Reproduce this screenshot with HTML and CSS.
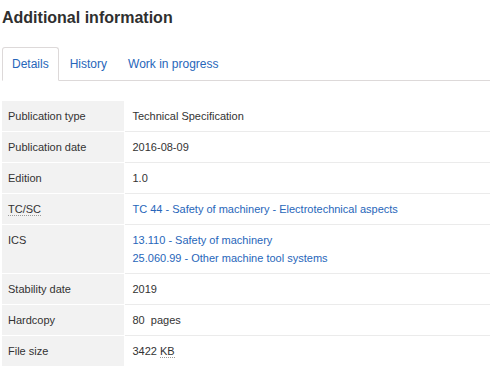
FILE: index.html
```html
<!DOCTYPE html>
<html lang="en">
<head>
    <meta charset="UTF-8">
    <title>Additional information</title>
    <link rel="stylesheet" href="styles.css">
</head>
<body>
    <div class="container">
        <h2 class="section-title">Additional information</h2>

        <ul class="nav-tabs">
            <li class="active"><a href="#details">Details</a></li>
            <li><a href="#history">History</a></li>
            <li><a href="#wip">Work in progress</a></li>
        </ul>

        <table class="details-table">
            <colgroup>
                <col class="col-label">
                <col>
            </colgroup>
            <tr>
                <th>Publication type</th>
                <td>Technical Specification</td>
            </tr>
            <tr>
                <th>Publication date</th>
                <td>2016-08-09</td>
            </tr>
            <tr>
                <th>Edition</th>
                <td>1.0</td>
            </tr>
            <tr>
                <th><abbr title="Technical Committee / Subcommittee">TC/SC</abbr></th>
                <td><a href="#">TC 44 - Safety of machinery - Electrotechnical aspects</a></td>
            </tr>
            <tr>
                <th>ICS</th>
                <td>
                    <a href="#" class="block-link">13.110 - Safety of machinery</a>
                    <a href="#" class="block-link">25.060.99 - Other machine tool systems</a>
                </td>
            </tr>
            <tr>
                <th>Stability date</th>
                <td>2019</td>
            </tr>
            <tr>
                <th>Hardcopy</th>
                <td>80&nbsp; pages</td>
            </tr>
            <tr>
                <th>File size</th>
                <td>3422 <abbr title="Kilobytes">KB</abbr></td>
            </tr>
        </table>
    </div>
</body>
</html>
```

FILE: styles.css
```css
:root {
    --text-color: #333333;
    --link-color: #2766ba;
    --label-bg: #f2f2f2;
    --line-color: #ebebeb;
    --tab-border: #ddd9d9;
}

* {
    box-sizing: border-box;
    margin: 0;
    padding: 0;
}

body {
    font-family: "Liberation Sans", Arial, sans-serif;
    color: var(--text-color);
    background: #ffffff;
}

.container {
    padding: 9px 0 0 2px;
}

.section-title {
    font-size: 16px;
    font-weight: 700;
    line-height: 18px;
    margin-bottom: 20px;
    color: #2f2f2f;
}

.nav-tabs {
    list-style: none;
    display: flex;
    border-bottom: 1px solid var(--tab-border);
    margin-bottom: 20px;
}

.nav-tabs li {
    margin-right: 1px;
    margin-bottom: -1px;
}

.nav-tabs a {
    display: block;
    font-size: 12px;
    line-height: 14px;
    padding: 9px;
    border: 1px solid transparent;
    border-radius: 3px 3px 0 0;
    color: var(--link-color);
    text-decoration: none;
}

.nav-tabs li.active a {
    border-color: var(--tab-border);
    border-bottom-color: #ffffff;
    background: #ffffff;
}

.details-table {
    width: 100%;
    border-collapse: collapse;
    table-layout: fixed;
    font-size: 11px;
    line-height: 18px;
}

.col-label {
    width: 122px;
}

.details-table th,
.details-table td {
    padding: 6px 8px;
    text-align: left;
    vertical-align: top;
    font-weight: 400;
}

.details-table th {
    background: var(--label-bg);
    padding-left: 6px;
    border-bottom: 1px solid #ffffff;
    border-right: 1px solid #ffffff;
}

.details-table td {
    border-bottom: 1px solid var(--line-color);
}

.details-table a {
    color: var(--link-color);
    text-decoration: none;
}

.block-link {
    display: block;
}

abbr {
    text-decoration: none;
    border-bottom: 1px dotted #9a9a9a;
}
```
